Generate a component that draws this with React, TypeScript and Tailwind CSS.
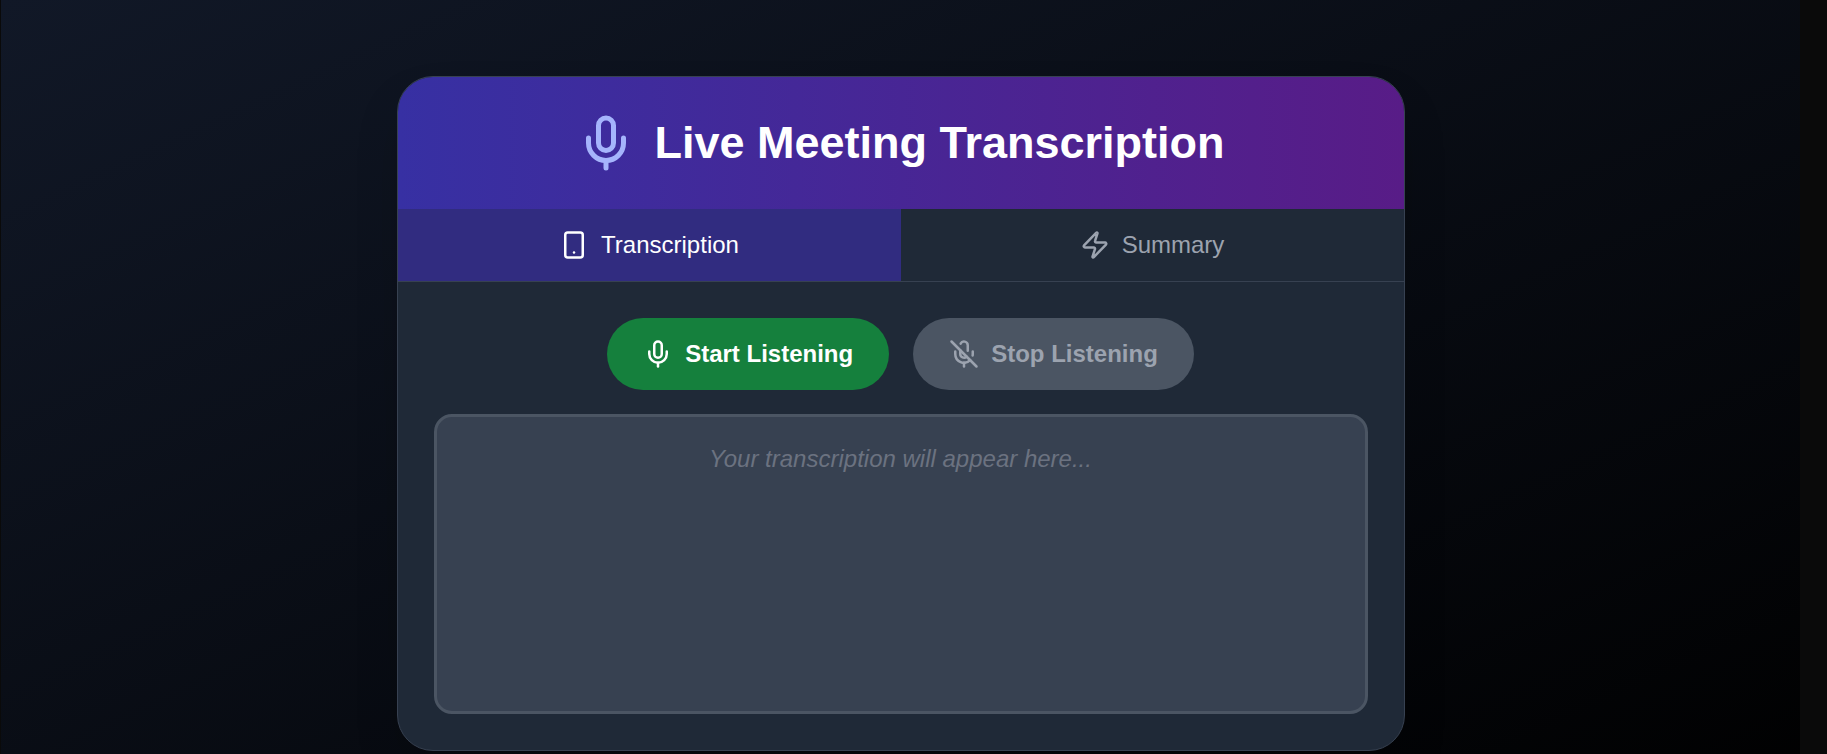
import { useState } from "react";
import { Mic, MicOff, Smartphone, Zap } from "lucide-react";

type Tab = "transcription" | "summary";

export default function App() {
  const [tab, setTab] = useState<Tab>("transcription");
  const [listening, setListening] = useState(false);

  const tabClass = (active: boolean) =>
    active
      ? "flex h-18 flex-1 items-center justify-center gap-3 bg-[#312c80] text-white"
      : "flex h-18 flex-1 items-center justify-center gap-3 bg-[#1f2937] text-[#9ca3af]";

  return (
    <div className="h-screen overflow-hidden bg-[#0a0a0a] pr-[27px] pl-px font-['Liberation_Sans',Arial,sans-serif] text-2xl leading-9">
      <div className="flex justify-center bg-linear-to-br/srgb from-[#111827] to-black py-19">
        <main className="w-full max-w-[1008px] overflow-hidden rounded-[36px] border border-[#374151] bg-[#1f2937] shadow-2xl">
          <header className="flex items-center justify-center gap-[18px] bg-linear-to-r/srgb from-[#3730a3] to-[#581c87] py-9">
            <Mic size={60} className="text-[#a5b4fc]" aria-hidden="true" />
            <h1 className="text-[45px] leading-[54px] font-bold text-white">
              Live Meeting Transcription
            </h1>
          </header>

          <nav className="flex border-b border-[#374151]">
            <button
              type="button"
              className={tabClass(tab === "transcription")}
              onClick={() => setTab("transcription")}
            >
              <Smartphone size={30} aria-hidden="true" />
              Transcription
            </button>
            <button
              type="button"
              className={tabClass(tab === "summary")}
              onClick={() => setTab("summary")}
            >
              <Zap size={30} aria-hidden="true" />
              Summary
            </button>
          </nav>

          <section className="p-9">
            <div className="mb-6 flex justify-center gap-6">
              <button
                type="button"
                disabled={listening}
                onClick={() => setListening(true)}
                className="flex h-18 items-center gap-3 rounded-full bg-[#15803d] px-9 font-bold text-white disabled:bg-[#4b5563] disabled:text-[#9ca3af]"
              >
                <Mic size={30} aria-hidden="true" />
                Start Listening
              </button>
              <button
                type="button"
                disabled={!listening}
                onClick={() => setListening(false)}
                className="flex h-18 items-center gap-3 rounded-full bg-[#b91c1c] px-9 font-bold text-white disabled:bg-[#4b5563] disabled:text-[#9ca3af]"
              >
                <MicOff size={30} aria-hidden="true" />
                Stop Listening
              </button>
            </div>

            <div className="min-h-[300px] rounded-[18px] border-3 border-[#4b5563] bg-[#374151] p-6">
              <p className="text-center text-[#6b7280] italic">
                Your transcription will appear here...
              </p>
            </div>
          </section>
        </main>
      </div>
    </div>
  );
}
